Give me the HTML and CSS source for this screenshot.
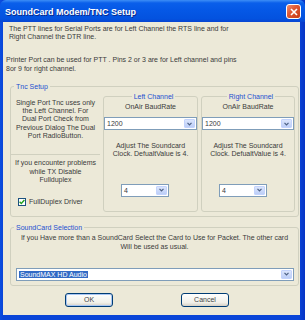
FILE: index.html
```html
<!DOCTYPE html>
<html lang="en">
<head>
  <meta charset="UTF-8">
  <title>SoundCard Modem/TNC Setup</title>
  <link rel="stylesheet" href="styles.css">
</head>
<body>
  <!-- XP style dialog window -->
  <div class="window">
    <div class="titlebar">
      <span class="title">SoundCard Modem/TNC Setup</span>
      <span class="close">
        <svg width="8" height="8" viewBox="0 0 8 8"><path d="M1 1L7 7M7 1L1 7" stroke="#fff" stroke-width="1.6"/></svg>
      </span>
    </div>

    <div class="client">
      <p class="intro">The PTT lines for Serial Ports are for Left Channel the RTS line and for<br>Right Channel the DTR line.</p>
      <p class="printer">Printer Port can be used for PTT . Pins 2 or 3 are for Left channel and pins<br>8or 9 for right channel.</p>

      <!-- Tnc setup group -->
      <fieldset class="group tnc">
        <legend>Tnc Setup</legend>
        <div class="tnc-grid">
          <div class="side">
            <p class="side-top">Single Port Tnc uses only<br>the Left Channel. For<br>Dual Port Check from<br>Previous Dialog The Dual<br>Port RadioButton.</p>
            <div class="side-bottom">
              <p>If you encounter problems<br>while TX Disable<br>Fullduplex</p>
              <label class="check">
                <span class="box"><svg width="6" height="6" viewBox="0 0 6 6"><path d="M0.6 2.8L2.3 4.5L5.4 1" fill="none" stroke="#21a121" stroke-width="1.4"/></svg></span>
                FullDuplex Driver
              </label>
            </div>
          </div>

          <fieldset class="group channel">
            <legend>Left Channel</legend>
            <p class="caption">OnAir BaudRate</p>
            <div class="combo"><span class="value">1200</span><span class="arrow"><svg width="5" height="4" viewBox="0 0 5 4"><path d="M0.5 0.8L2.5 2.8L4.5 0.8" fill="none" stroke="#4d6185" stroke-width="1.2"/></svg></span></div>
            <p class="adjust">Adjust The Soundcard<br>Clock. DefualtValue is 4.</p>
            <div class="combo small"><span class="value">4</span><span class="arrow"><svg width="5" height="4" viewBox="0 0 5 4"><path d="M0.5 0.8L2.5 2.8L4.5 0.8" fill="none" stroke="#4d6185" stroke-width="1.2"/></svg></span></div>
          </fieldset>

          <fieldset class="group channel">
            <legend>Right Channel</legend>
            <p class="caption">OnAir BaudRate</p>
            <div class="combo"><span class="value">1200</span><span class="arrow"><svg width="5" height="4" viewBox="0 0 5 4"><path d="M0.5 0.8L2.5 2.8L4.5 0.8" fill="none" stroke="#4d6185" stroke-width="1.2"/></svg></span></div>
            <p class="adjust">Adjust The Soundcard<br>Clock. DefualtValue is 4.</p>
            <div class="combo small"><span class="value">4</span><span class="arrow"><svg width="5" height="4" viewBox="0 0 5 4"><path d="M0.5 0.8L2.5 2.8L4.5 0.8" fill="none" stroke="#4d6185" stroke-width="1.2"/></svg></span></div>
          </fieldset>
        </div>
      </fieldset>

      <!-- Soundcard selection group -->
      <fieldset class="group sound">
        <legend>SoundCard Selection</legend>
        <p class="sound-text">If you Have more than a SoundCard Select the Card to Use for Packet. The other card<br>Will be used as usual.</p>
        <div class="combo wide"><span class="value"><span class="selected">SoundMAX HD Audio</span></span><span class="arrow"><svg width="5" height="4" viewBox="0 0 5 4"><path d="M0.5 0.8L2.5 2.8L4.5 0.8" fill="none" stroke="#4d6185" stroke-width="1.2"/></svg></span></div>
      </fieldset>

      <div class="buttons">
        <button class="btn default">OK</button>
        <button class="btn">Cancel</button>
      </div>
    </div>
  </div>
</body>
</html>
```

FILE: styles.css
```css
/* Reset page */
html, body {
  margin: 0;
  padding: 0;
  background: #fff;
}
/* Window frame */
.window {
  width: 305px;
  height: 320px;
  display: flex;
  flex-direction: column;
  background: linear-gradient(90deg, #0b4ee0 0, #0a45d8 3px, #0a45d8 299px, #0734c4 305px);
  font-family: "Liberation Sans", Arial, sans-serif;
  font-size: 7px;
  color: #3a3a3a;
}
/* Blue title bar */
.titlebar {
  height: 22px;
  flex: none;
  display: flex;
  align-items: center;
  justify-content: space-between;
  padding: 0 4px 0 5px;
  background: linear-gradient(#3d8ef6 0, #0a5fea 3px, #0558e6 45%, #0352df 85%, #0845d2 100%);
  border-radius: 6px 6px 0 0;
}
.title {
  font-weight: bold;
  font-size: 9px;
  color: #fff;
  text-shadow: 1px 1px 0 #0a2a8a;
  padding-top: 1px;
}
/* Red close button */
.close {
  width: 13px;
  height: 13px;
  margin-top: 1px;
  display: flex;
  align-items: center;
  justify-content: center;
  border: 1px solid #fff;
  border-radius: 3px;
  background: linear-gradient(135deg, #f09072 0, #e05a35 40%, #c63a14 100%);
}
/* Beige client area */
.client {
  flex: 1;
  margin: 0 5px 5px 3px;
  background: #ece9d8;
  display: flex;
  flex-direction: column;
}
p {
  margin: 0;
  line-height: 8.7px;
}
.intro {
  margin-top: 2.5px;
  padding-left: 6px;
}
.printer {
  margin-top: 14.5px;
  padding-left: 3px;
}
/* Group boxes */
.group {
  margin: 0;
  padding: 0;
  border: 1px solid #d0d0bf;
  border-radius: 3px;
  min-inline-size: 0;
}
.group legend {
  margin-left: 3px;
  padding: 0 2px;
  color: #1c4fd0;
  line-height: 9px;
}
.tnc {
  margin: 8.5px 0 0 7px;
  width: 289px;
  box-sizing: border-box;
  padding: 0 6px 4px 0;
}
.tnc-grid {
  margin-top: 1px;
  display: grid;
  grid-template-columns: 89px 95px 94px;
  column-gap: 3px;
}
/* Left info column */
.side {
  text-align: center;
}
.side-top {
  padding: 6.5px 0 14px;
  border-bottom: 1px solid #d0d0bf;
  line-height: 8.3px;
}
.side-bottom p {
  padding-top: 3.5px;
}
.check {
  display: flex;
  align-items: center;
  gap: 3px;
  margin: 12.5px 0 0 7px;
  line-height: 9px;
}
.box {
  width: 6px;
  height: 6px;
  display: flex;
  align-items: center;
  justify-content: center;
  border: 1px solid #1c5180;
  background: #fff;
}
/* Channel group boxes */
.channel {
  height: 119.5px;
  box-sizing: border-box;
  text-align: center;
}
.caption {
  margin-top: 1.5px;
}
.adjust {
  margin-top: 11.5px;
}
/* Combo boxes */
.combo {
  height: 13px;
  box-sizing: border-box;
  display: flex;
  align-items: stretch;
  border: 1px solid #7f9db9;
  background: #fff;
  text-align: left;
  margin-top: 5.5px;
}
.combo .value {
  flex: 1;
  padding-left: 2px;
  line-height: 11px;
}
.combo .arrow {
  width: 11px;
  margin: 1px;
  display: flex;
  align-items: center;
  justify-content: center;
  border-radius: 1px;
  background: linear-gradient(#dbe5fc, #bccef7);
  border: 1px solid #c3d3fd;
  box-sizing: border-box;
}
.combo.small {
  width: 48px;
  margin: 25px 0 0 17px;
}
/* Soundcard selection */
.sound {
  margin: 6.5px 0 0 7px;
  width: 289px;
  box-sizing: border-box;
  padding: 0 0 4px;
}
.sound-text {
  margin-top: 1.75px;
  text-align: center;
}
.combo.wide {
  margin: 16.5px 4px 0 5px;
}
.selected {
  background: #316ac5;
  color: #fff;
  padding: 0 1px;
}
/* Dialog buttons */
.buttons {
  display: flex;
  gap: 68px;
  padding-left: 62px;
  margin-top: 7px;
}
.btn {
  width: 48px;
  height: 14px;
  padding: 0;
  font-family: "Liberation Sans", Arial, sans-serif;
  font-size: 7px;
  color: #444;
  border: 1px solid #003c74;
  border-radius: 3px;
  background: linear-gradient(#fefefe, #f2f1ea 70%, #d6d0c5);
}
.btn.default {
  box-shadow: inset 0 0 0 1px #a8c6f4;
}
```
